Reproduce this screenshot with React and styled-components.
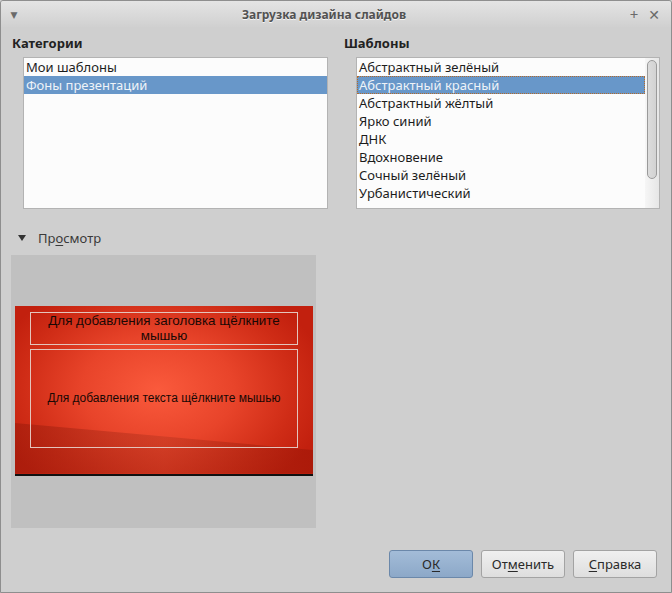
import React from 'react'
import styled, { createGlobalStyle } from 'styled-components'

const Global = createGlobalStyle`
  html, body { margin: 0; padding: 0; background: #cfcfcf; }
  body { font-family: "Noto Sans", "DejaVu Sans", sans-serif; font-size: 13px; color: #1a1a1a; }
`

const Window = styled.div`
  width: 672px;
  height: 593px;
  box-sizing: border-box;
  border: 1px solid #8e8e8e;
  border-radius: 3px 3px 0 0;
  background: #cfcfcf;
  display: flex;
  flex-direction: column;
  overflow: hidden;
`

const TitleBar = styled.div`
  height: 26px;
  flex: none;
  display: flex;
  align-items: center;
  padding: 0 10px 0 6px;
  background: linear-gradient(#e4e4e4, #d0d0d0);
`

const Title = styled.div`
  flex: 1;
  text-align: center;
  font-weight: bold;
  font-size: 12px;
  color: #525252;
  text-shadow: 0 1px 0 #f4f4f4;
`

const TitleBtn = styled.span`
  width: 14px;
  display: inline-flex;
  justify-content: center;
  align-items: center;
  color: #6a6a6a;
  font-size: ${(p) => p.size || 12}px;
  margin-left: ${(p) => p.gap || 0}px;
`

const Body = styled.div`
  flex: 1;
  display: flex;
  flex-direction: column;
  padding: 5px 11px 14px 10px;
`

const Columns = styled.div`
  display: grid;
  grid-template-columns: 317px 317px;
  column-gap: 15px;
`

const Column = styled.div`
  display: flex;
  flex-direction: column;
`

const Heading = styled.div`
  font-weight: bold;
  font-size: 13px;
  height: 22px;
  line-height: 22px;
  padding-left: 1px;
  color: #222;
`

const ListBox = styled.div`
  margin-left: ${(p) => p.indent}px;
  margin-top: 3px;
  height: 152px;
  box-sizing: border-box;
  border: 1px solid #b3b3b3;
  background: #fcfcfc;
  display: flex;
  overflow: hidden;
`

const Items = styled.div`
  flex: 1;
  min-width: 0;
`

const Item = styled.div`
  height: 18px;
  white-space: nowrap;
  color: ${(p) => (p.selected ? '#eef3f8' : '#1c1c1c')};
  background: ${(p) => (p.selected ? '#6897c9' : 'transparent')};
  box-sizing: border-box;
  border: ${(p) => (p.focus ? '1px dotted #b36a2a' : 'none')};
  line-height: ${(p) => (p.focus ? '16px' : '18px')};
  padding-left: ${(p) => (p.focus ? '1px' : '2px')};
`

const ScrollTrack = styled.div`
  width: 14px;
  flex: none;
  background: linear-gradient(90deg, #f6f6f6, #e6e6e6);
  padding: 2px 2px 0 2px;
  box-sizing: border-box;
`

const ScrollThumb = styled.div`
  height: 119px;
  border: 1px solid #9a9a9a;
  border-radius: 5px;
  background: linear-gradient(90deg, #dcdcdc, #d2d2d2);
  box-sizing: border-box;
`

const Expander = styled.div`
  display: flex;
  align-items: center;
  margin-top: 20px;
  height: 18px;
  padding-left: 7px;
  color: #3a3a3a;
`

const Arrow = styled.span`
  width: 0;
  height: 0;
  border-left: 4px solid transparent;
  border-right: 4px solid transparent;
  border-top: 6px solid #333;
  margin-right: 12px;
`

const U = styled.span`
  text-decoration: underline;
  text-underline-offset: 2px;
`

const Preview = styled.div`
  margin-top: 8px;
  width: 305px;
  height: 273px;
  background: #c0c0c0;
  display: flex;
  flex-direction: column;
  align-items: center;
  justify-content: center;
  padding: 0 0 2px 1px;
  box-sizing: border-box;
`

const Slide = styled.div`
  width: 298px;
  height: 170px;
  box-sizing: border-box;
  border-bottom: 2px solid #111;
  position: relative;
  overflow: hidden;
  background: radial-gradient(ellipse 170px 120px at 48% 50%, #fa5a3c 0%, #e8442a 45%, #cf2c16 80%, #c2200e 100%);
  display: flex;
  flex-direction: column;
  padding: 6px 15px 0 15px;
  font-family: "Liberation Sans", Arial, sans-serif;
  color: #1a0804;

  &::after {
    content: '';
    position: absolute;
    inset: 0;
    background: linear-gradient(90deg, rgba(150, 25, 10, 0.5), rgba(175, 50, 30, 0.4) 50%, rgba(150, 20, 5, 0.5));
    clip-path: polygon(0 70%, 100% 86%, 100% 100%, 0 100%);
    pointer-events: none;
  }
`

const Placeholder = styled.div`
  border: 1px solid #e4c4bc;
  height: ${(p) => p.h}px;
  margin-top: ${(p) => p.mt || 0}px;
  display: flex;
  align-items: center;
  justify-content: center;
  text-align: center;
  font-size: ${(p) => p.fs}px;
  line-height: ${(p) => p.lh}px;
  position: relative;
  z-index: 1;
  padding: 0 8px;
`

const ButtonRow = styled.div`
  margin-top: auto;
  margin-right: 3px;
  display: flex;
  justify-content: flex-end;
  gap: 8px;
`

const Button = styled.button`
  width: 84px;
  height: 28px;
  border-radius: 3px;
  font-family: "Noto Sans", sans-serif;
  font-size: 13px;
  color: #2a2a2a;
  border: 1px solid ${(p) => (p.primary ? '#6b88aa' : '#a3a3a3')};
  background: ${(p) =>
    p.primary ? 'linear-gradient(#a3bcd8, #8ca8c8)' : 'linear-gradient(#f0f0f0, #dedede)'};
  padding: 0;
`

const categories = ['Мои шаблоны', 'Фоны презентаций']
const templates = [
  'Абстрактный зелёный',
  'Абстрактный красный',
  'Абстрактный жёлтый',
  'Ярко синий',
  'ДНК',
  'Вдохновение',
  'Сочный зелёный',
  'Урбанистический',
]

export default function App() {
  return (
    <>
      <Global />
      <Window>
        <TitleBar>
          <TitleBtn size={9}>▼</TitleBtn>
          <Title>Загрузка дизайна слайдов</Title>
          <TitleBtn size={15}>+</TitleBtn>
          <TitleBtn size={14} gap={6}>✕</TitleBtn>
        </TitleBar>
        <Body>
          <Columns>
            <Column>
              <Heading>Категории</Heading>
              <ListBox indent={12}>
                <Items>
                  {categories.map((c, i) => (
                    <Item key={c} selected={i === 1}>{c}</Item>
                  ))}
                </Items>
              </ListBox>
            </Column>
            <Column>
              <Heading>Шаблоны</Heading>
              <ListBox indent={13}>
                <Items>
                  {templates.map((t, i) => (
                    <Item key={t} selected={i === 1} focus={i === 1}>{t}</Item>
                  ))}
                </Items>
                <ScrollTrack>
                  <ScrollThumb />
                </ScrollTrack>
              </ListBox>
            </Column>
          </Columns>
          <Expander>
            <Arrow />
            Пр<U>о</U>смотр
          </Expander>
          <Preview>
            <Slide>
              <Placeholder h={31} fs={13.4} lh={15}>Для добавления заголовка щёлкните мышью</Placeholder>
              <Placeholder h={97} mt={4} fs={12} lh={13}>Для добавления текста щёлкните мышью</Placeholder>
            </Slide>
          </Preview>
          <ButtonRow>
            <Button primary>О<U>К</U></Button>
            <Button>От<U>м</U>енить</Button>
            <Button><U>С</U>правка</Button>
          </ButtonRow>
        </Body>
      </Window>
    </>
  )
}
